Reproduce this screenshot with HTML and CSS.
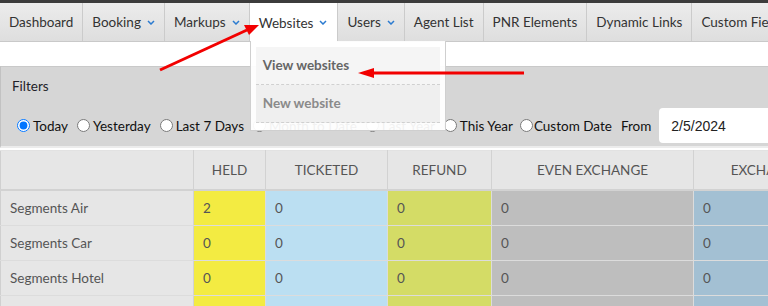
FILE: index.html
```html
<!DOCTYPE html>
<html lang="en">
<head>
    <meta charset="UTF-8">
    <title>Dashboard</title>
    <link rel="stylesheet" href="styles.css">
</head>
<body>
    <div class="topbar"></div>

    <!-- Main menu -->
    <ul class="menu">
        <li class="menu-item">Dashboard</li>
        <li class="menu-item">Booking <svg class="caret" viewBox="0 0 8 5"><polyline points="1,1 4,4 7,1"/></svg></li>
        <li class="menu-item">Markups <svg class="caret" viewBox="0 0 8 5"><polyline points="1,1 4,4 7,1"/></svg></li>
        <li class="menu-item active">Websites <svg class="caret" viewBox="0 0 8 5"><polyline points="1,1 4,4 7,1"/></svg>
            <ul class="dropdown">
                <li class="dropdown-item first">View websites</li>
                <li class="dropdown-item second">New website</li>
            </ul>
        </li>
        <li class="menu-item">Users <svg class="caret" viewBox="0 0 8 5"><polyline points="1,1 4,4 7,1"/></svg></li>
        <li class="menu-item">Agent List</li>
        <li class="menu-item">PNR Elements</li>
        <li class="menu-item">Dynamic Links</li>
        <li class="menu-item">Custom Fields</li>
    </ul>

    <!-- Filters -->
    <div class="filters">
        <div class="filters-title">Filters</div>
        <div class="filters-row">
            <label class="opt"><input type="radio" name="range" checked><span>Today</span></label>
            <label class="opt"><input type="radio" name="range"><span>Yesterday</span></label>
            <label class="opt"><input type="radio" name="range"><span>Last 7 Days</span></label>
            <label class="opt"><input type="radio" name="range"><span>Month to Date</span></label>
            <label class="opt"><input type="radio" name="range"><span>Last Year</span></label>
            <label class="opt"><input type="radio" name="range"><span>This Year</span></label>
            <label class="opt tight"><input type="radio" name="range"><span>Custom Date</span></label>
            <span class="from">From</span>
            <input class="date" type="text" value="2/5/2024">
        </div>
    </div>

    <!-- Stats table -->
    <table class="stats">
        <colgroup>
            <col class="c-label"><col class="c-held"><col class="c-ticketed"><col class="c-refund"><col class="c-even"><col class="c-exch">
        </colgroup>
        <thead>
            <tr>
                <th></th>
                <th>Held</th>
                <th>Ticketed</th>
                <th>Refund</th>
                <th>Even Exchange</th>
                <th>Exchange</th>
            </tr>
        </thead>
        <tbody>
            <tr>
                <td class="label">Segments Air</td>
                <td class="held">2</td><td class="ticketed">0</td><td class="refund">0</td><td class="even">0</td><td class="exch">0</td>
            </tr>
            <tr>
                <td class="label">Segments Car</td>
                <td class="held">0</td><td class="ticketed">0</td><td class="refund">0</td><td class="even">0</td><td class="exch">0</td>
            </tr>
            <tr>
                <td class="label">Segments Hotel</td>
                <td class="held">0</td><td class="ticketed">0</td><td class="refund">0</td><td class="even">0</td><td class="exch">0</td>
            </tr>
            <tr>
                <td class="label">Segments Rail</td>
                <td class="held">0</td><td class="ticketed">0</td><td class="refund">0</td><td class="even">0</td><td class="exch">0</td>
            </tr>
        </tbody>
    </table>

    <!-- Annotation arrows -->
    <svg class="arrows" width="768" height="306">
        <line x1="160" y1="70" x2="247" y2="30" />
        <polygon points="259,25 244,25 249,35" />
        <line x1="524" y1="73" x2="372" y2="73" />
        <polygon points="358,73 374,68 374,78" />
    </svg>
</body>
</html>
```

FILE: styles.css
```css
body {
    margin: 0;
    font-family: Lato, "Open Sans", sans-serif;
    font-size: 13.5px;
    color: #333;
    background: #fff;
    overflow: hidden;
    position: relative;
    height: 306px;
}
.topbar {
    height: 3px;
    background: #3c3c3c;
}
/* Menu */
.menu {
    display: flex;
    margin: 0;
    padding: 0;
    list-style: none;
    height: 38px;
    background: linear-gradient(#ececec, #dedede);
    border-bottom: 1px solid #c9c9c9;
    white-space: nowrap;
}
.menu-item {
    position: relative;
    display: flex;
    align-items: center;
    padding: 0 9px 0 9px;
    border-right: 1px solid #cbcbcb;
    color: #333;
}
.menu-item.active {
    background: #fff;
    height: 39px;
    padding-left: 9px;
    padding-right: 10px;
}
.caret {
    width: 8px;
    height: 5px;
    margin-left: 6px;
    fill: none;
    stroke: #2b7bd0;
    stroke-width: 1.5;
}
.dropdown {
    position: absolute;
    top: 38px;
    left: 0;
    z-index: 5;
    width: 184px;
    margin: 0;
    padding: 6px 5px 7px 5px;
    list-style: none;
    background: rgba(255, 255, 255, 0.94);
    border: 1px solid #cfcfcf;
    border-top: none;
}
.dropdown-item {
    height: 37px;
    line-height: 37px;
    padding-left: 7px;
    font-weight: bold;
    border-bottom: 1px dashed #d0d0d0;
}
.dropdown-item.first {
    background: #f5f5f5;
    color: #666;
}
.dropdown-item.second {
    background: #efefef;
    color: #8a8a8a;
}
/* Filters */
.filters {
    margin-top: 24px;
    padding: 10px 0 3px 11px;
    background: #d6d6d6;
    border-top: 1px solid #c9c9c9;
    border-left: 1px solid #c2c2c2;
    border-bottom: 2px solid #ececec;
}
.filters-title {
    line-height: 18px;
    color: #1f1f2a;
    margin-bottom: 13px;
}
.filters-row {
    display: flex;
    align-items: center;
    gap: 4px;
    white-space: nowrap;
    color: #111;
}
.opt {
    display: flex;
    align-items: center;
}
.opt input {
    margin: 0 3px 0 5px;
    width: 13px;
    height: 13px;
}
.opt.tight input {
    margin-left: 3px;
    margin-right: 1px;
}
.from {
    margin-left: 5px;
    margin-right: 4px;
}
.date {
    width: 114px;
    height: 35px;
    box-sizing: border-box;
    padding: 0 12px;
    border: none;
    border-radius: 4px 0 0 4px;
    background: #fff;
    font-family: "Liberation Sans", Arial, sans-serif;
    font-size: 14px;
    color: #222;
}
/* Stats table */
.stats {
    margin-top: 2px;
    border-collapse: collapse;
    table-layout: fixed;
    width: 840px;
    border-left: 1px solid #d0d0d0;
    color: #555;
}
.c-label { width: 193px; }
.c-held { width: 72px; }
.c-ticketed { width: 122px; }
.c-refund { width: 104px; }
.c-even { width: 202px; }
.c-exch { width: 147px; }
.stats th {
    height: 38px;
    padding: 0;
    background: #e6e6e6;
    font-weight: normal;
    text-transform: uppercase;
    border-top: 1px solid #e2e2e2;
    border-right: 1px solid #d2d2d2;
    border-bottom: 2px solid #d2d2d2;
    text-align: center;
}
.stats td {
    height: 34px;
    padding: 0 9px;
    border-right: 1px solid #dcdcdc;
    border-bottom: 1px solid #dcdcdc;
}
.stats td.label {
    background: #e6e6e6;
    padding-left: 9px;
    border-right-color: #d2d2d2;
}
.held { background: #f3eb42; }
.ticketed { background: #bbdff2; }
.refund { background: #d4dc66; }
.even { background: #bebebe; }
.exch { background: #a3c0d3; }
/* Arrows */
.arrows {
    position: absolute;
    top: 0;
    left: 0;
    z-index: 10;
    pointer-events: none;
}
.arrows line {
    stroke: #f20000;
    stroke-width: 3;
}
.arrows polygon {
    fill: #f20000;
}
```
